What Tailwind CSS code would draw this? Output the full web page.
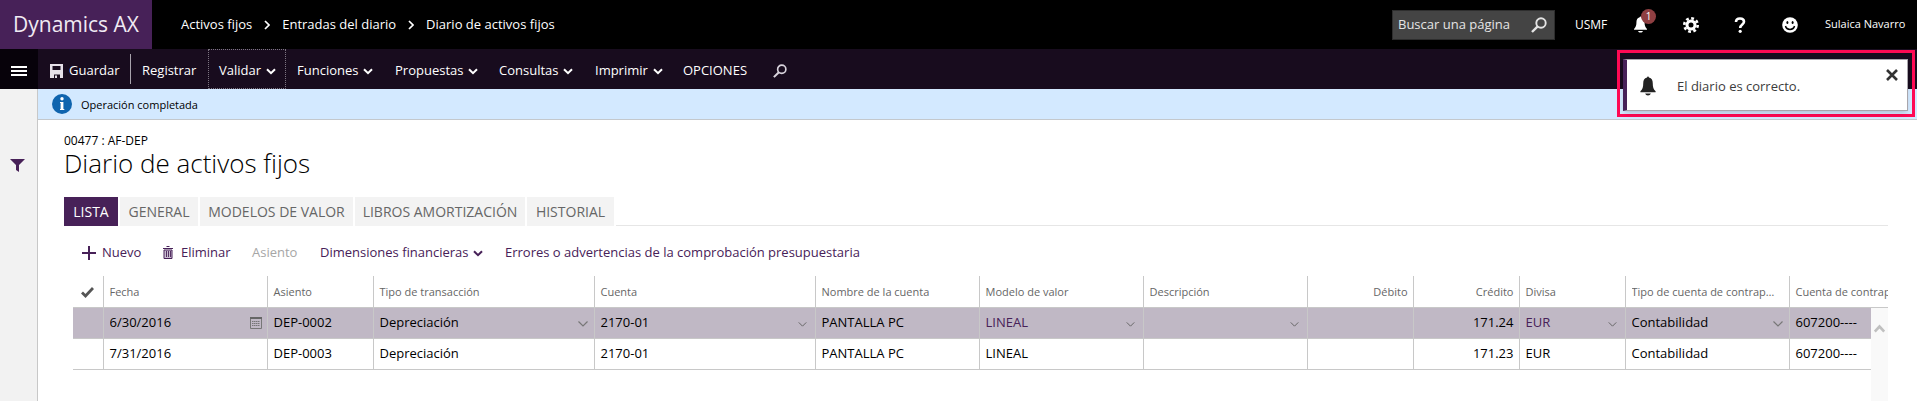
<!DOCTYPE html>
<html lang="es">
<head>
    <meta charset="UTF-8">
    <meta name="viewport" content="width=device-width, initial-scale=1.0">
    <title>Diario de activos fijos - Dynamics AX</title>
    <script src="https://cdn.jsdelivr.net/npm/@tailwindcss/browser@4"></script>
</head>
<body class="flex min-h-screen flex-col overflow-x-hidden bg-white font-['Segoe_UI','Open_Sans',sans-serif] text-[13px] text-black">
    <!-- Shared icons -->
    <svg class="hidden">
        <symbol id="chevron" viewBox="0 0 10 7"><path d="M1 1.2 5 5.2 9 1.2" fill="none" stroke="currentColor" stroke-width="2"/></symbol>
        <symbol id="chevron-thin" viewBox="0 0 10 6"><path d="M.5.5 5 5 9.500.5" fill="none" stroke="currentColor" stroke-width="1.2"/></symbol>
        <symbol id="crumb" viewBox="0 0 6 10"><path d="M1 1 5 5 1 9" fill="none" stroke="currentColor" stroke-width="1.7"/></symbol>
        <symbol id="search" viewBox="0 0 16 16"><circle cx="10" cy="6" r="4.700" fill="none" stroke="currentColor" stroke-width="1.9"/><path d="M6.700 9.300 1 15" stroke="currentColor" stroke-width="2.400"/></symbol>
        <symbol id="bell" viewBox="0 0 16 21"><path d="M7 1.500a1 1 0 0 1 2 0C12 2.300 13 4.500 13 7.500c0 4 .7 6.300 3 8.500v1H0v-1c2.300-2.200 3-4.500 3-8.500 0-3 1-5.200 4-6zM5 18.500h6c-.5 1.300-1.500 2-3 2s-2.500-.7-3-2z" fill="currentColor"/></symbol>
    </svg>

    <!-- Top bar -->
    <header class="flex h-[49px] shrink-0 items-center bg-black text-white">
        <a href="#" class="flex h-full w-[152px] items-center bg-[#472158] pl-[13px] text-[21px] text-[#f0eaf3]">Dynamics AX</a>
        <nav class="flex items-center pl-[29px]" aria-label="Ruta">
            <a href="#">Activos fijos</a>
            <svg class="mx-[12px] h-[10px] w-[6px]"><use href="#crumb"/></svg>
            <a href="#">Entradas del diario</a>
            <svg class="mx-[12px] h-[10px] w-[6px]"><use href="#crumb"/></svg>
            <a href="#">Diario de activos fijos</a>
        </nav>
        <div class="ml-auto flex items-center pr-[9px] text-[12px]">
            <div class="mr-[20px] flex h-[30px] w-[163px] items-center border border-[#2e2e2e] bg-[#444] pr-[7px] pl-[5px]">
                <input type="search" aria-label="Buscar una página" placeholder="Buscar una página" class="min-w-0 flex-1 bg-transparent text-[13px] outline-none placeholder:text-[#e4e4e4]">
                <button aria-label="Buscar"><svg class="h-[16px] w-[16px] text-[#e4e4e4]"><use href="#search"/></svg></button>
            </div>
            <button class="w-[59px] text-left">USMF</button>
            <button class="relative w-[49px]" aria-label="Notificaciones">
                <svg class="h-[17px] w-[13px]"><use href="#bell"/></svg>
                <span class="absolute -top-[7px] left-[7px] h-[15px] w-[15px] rounded-full bg-[#8f3f42] text-[10px] leading-[15px]">1</span>
            </button>
            <button class="w-[51px]" aria-label="Configuración">
                <svg class="h-[16px] w-[16px]" viewBox="0 0 16 16">
                    <circle cx="8" cy="8" r="6.700" fill="none" stroke="currentColor" stroke-width="2.600" stroke-dasharray="2.800 2.460"/>
                    <circle cx="8" cy="8" r="4" fill="none" stroke="currentColor" stroke-width="3"/>
                </svg>
            </button>
            <button class="w-[48px]" aria-label="Ayuda">
                <svg class="h-[16px] w-[12px]" viewBox="0 0 12 16">
                    <path d="M2 5C2 2.800 3.600 1.500 6 1.500s4 1.300 4 3.300C10 7.500 6.200 7.500 6.200 11" fill="none" stroke="currentColor" stroke-width="2.600"/>
                    <circle cx="6.200" cy="14.300" r="1.600" fill="currentColor"/>
                </svg>
            </button>
            <button class="w-[43px]" aria-label="Comentarios">
                <svg class="h-[16px] w-[16px]" viewBox="0 0 16 16">
                    <circle cx="8" cy="8" r="7.800" fill="currentColor"/>
                    <ellipse cx="5.400" cy="5.500" rx="1" ry="1.500"/><ellipse cx="10.600" cy="5.500" rx="1" ry="1.500"/>
                    <path d="M3.500 9c1 4.500 8 4.500 9 0" fill="none" stroke="#000" stroke-width="1.500"/>
                </svg>
            </button>
            <button class="w-[83px] text-left text-[11px]">Sulaica Navarro</button>
        </div>
    </header>

    <!-- Action pane -->
    <div class="relative flex h-[40px] shrink-0 items-stretch bg-[#180c1e] text-white [&>button]:pt-[3px]">
        <button class="flex w-[38px] items-center justify-center bg-[#07020a]" aria-label="Menú">
            <svg class="h-[10px] w-[16px]" viewBox="0 0 16 10"><path d="M0 1h16M0 5h16M0 9h16" stroke="#fff" stroke-width="2"/></svg>
        </button>
        <button class="flex w-[92px] items-center gap-[6px] pl-[12px]">
            <svg class="h-[14px] w-[13px]" viewBox="0 0 13 14" fill="#e6e1e9"><path fill-rule="evenodd" d="M0 0h13v14h-3v-3.500H4V14H0zM2.500 2v4h8V2z"/><path d="M5 11.500h2V14H5z"/></svg>
            Guardar
        </button>
        <div class="my-[5px] w-[1px] bg-[#a8a3ac]"></div>
        <button class="w-[77px] pl-[11px] text-left">Registrar</button>
        <button class="flex w-[78px] items-center gap-[5px] border border-dotted border-[#7c7581] pl-[10px]">Validar <svg class="mt-[2px] h-[7px] w-[10px]"><use href="#chevron"/></svg></button>
        <button class="flex w-[98px] items-center gap-[5px] pl-[11px]">Funciones <svg class="mt-[2px] h-[7px] w-[10px]"><use href="#chevron"/></svg></button>
        <button class="flex w-[104px] items-center gap-[5px] pl-[11px]">Propuestas <svg class="mt-[2px] h-[7px] w-[10px]"><use href="#chevron"/></svg></button>
        <button class="flex w-[96px] items-center gap-[5px] pl-[11px]">Consultas <svg class="mt-[2px] h-[7px] w-[10px]"><use href="#chevron"/></svg></button>
        <button class="flex w-[88px] items-center gap-[5px] pl-[11px]">Imprimir <svg class="mt-[2px] h-[7px] w-[10px]"><use href="#chevron"/></svg></button>
        <button class="w-[90px] pl-[11px] text-left">OPCIONES</button>
        <button class="pl-[11px]" aria-label="Buscar acción"><svg class="h-[14px] w-[14px] text-[#d8d3dc]"><use href="#search"/></svg></button>

        <!-- Notification toast -->
        <div class="absolute top-[1px] right-[2px] z-10 border-[3px] border-[#ff0a54] pt-[6px] pr-[4px] pb-[3px] pl-[3px]">
            <div class="flex h-[52px] w-[285px] border border-l-4 border-[#a9a6ac] border-l-[#472158] bg-white pl-[13px] text-[#3c3c3c] shadow-md" role="status">
                <svg class="mt-[16px] h-[20px] w-[16px] text-[#222]"><use href="#bell"/></svg>
                <p class="flex-1 self-center pt-[3px] pl-[21px]">El diario es correcto.</p>
                <button class="mt-[9px] mr-[9px] self-start" aria-label="Cerrar"><svg class="h-[12px] w-[12px]" viewBox="0 0 12 12"><path d="m1 1 10 10M11 1 1 11" stroke="#333" stroke-width="2.600"/></svg></button>
            </div>
        </div>
    </div>

    <div class="flex flex-1">
        <aside class="w-[38px] shrink-0 border-r border-[#c8c8c8] bg-[#f2f2f2] pt-[70px] pl-[10px]">
            <button class="block" aria-label="Filtro"><svg class="h-[13px] w-[15px]" viewBox="0 0 15 13"><path d="M0 0h15L9 6v7L6 11V6z" fill="#472158"/></svg></button>
        </aside>

        <main class="flex min-w-0 flex-1 flex-col">
            <div class="flex h-[31px] shrink-0 items-center border-b border-[#c4c8cc] bg-[#d3e9ff] pl-[14px] text-[11px]">
                <svg class="h-[20px] w-[20px]" viewBox="0 0 20 20"><circle cx="10" cy="10" r="10" fill="#0f64ae"/><circle cx="10" cy="4.800" r="1.700" fill="#fff"/><path d="M8 8h3.400v7.500h-2.800V9H8z" fill="#fff"/><path d="M8 15h4.300v1H8z" fill="#fff"/></svg>
                <span class="pt-[2px] pl-[9px]">Operación completada</span>
            </div>

            <div class="flex flex-1 flex-col pt-[13px] pr-[29px] pl-[26px]">
                <p class="text-[12px] leading-[16px]">00477 : AF-DEP</p>
                <h1 class="text-[26px] leading-[28px] font-light">Diario de activos fijos</h1>

                <div class="mt-[20px] flex h-[29px] gap-[2px] text-[14px] text-[#666]" role="tablist">
                    <button class="w-[54px] bg-[#472158] text-white" role="tab" aria-selected="true">LISTA</button>
                    <button class="w-[78px] bg-[#f3f3f3]" role="tab">GENERAL</button>
                    <button class="w-[153px] bg-[#f3f3f3]" role="tab">MODELOS DE VALOR</button>
                    <button class="w-[170px] bg-[#f3f3f3]" role="tab">LIBROS AMORTIZACIÓN</button>
                    <button class="w-[87px] bg-[#f3f3f3]" role="tab">HISTORIAL</button>
                    <div class="flex-1 border-b border-[#e6e6e6]"></div>
                </div>

                <div class="flex h-[50px] items-center pt-[3px] pl-[18px] text-[#472158]">
                    <button class="flex w-[81px] items-center gap-[6px]">
                        <svg class="h-[14px] w-[14px]" viewBox="0 0 14 14"><path d="M7 0v14M0 7h14" stroke="currentColor" stroke-width="2"/></svg>
                        Nuevo
                    </button>
                    <button class="flex w-[89px] items-center gap-[8px]">
                        <svg class="h-[13px] w-[10px]" viewBox="0 0 10 13"><path d="M3.500.5h3M0 2.500h10" stroke="currentColor"/><path d="M1 4h8v8.500H1z" fill="#c9bdd0" stroke="currentColor"/><path d="M3.500 5v6M5.500 5v6M7.500 5v6" stroke="currentColor" stroke-width=".9"/></svg>
                        Eliminar
                    </button>
                    <button class="w-[68px] text-left text-[#a6a6a6]" disabled>Asiento</button>
                    <button class="flex w-[185px] items-center gap-[4px]">Dimensiones financieras <svg class="mt-[2px] h-[7px] w-[10px]"><use href="#chevron"/></svg></button>
                    <button>Errores o advertencias de la comprobación presupuestaria</button>
                </div>

                <div class="relative ml-[9px] flex-1 overflow-hidden">
                    <table class="w-full table-fixed border-collapse text-left whitespace-nowrap [&_td]:h-[31px] [&_td]:border-b [&_td]:border-[#c8c8c8] [&_td]:pr-[5px] [&_td]:pl-[6px] [&_td+td]:border-l [&_th]:h-[31px] [&_th]:overflow-hidden [&_th]:border-b [&_th]:border-[#c8c8c8] [&_th]:pt-[2px] [&_th]:pr-[5px] [&_th]:pl-[6px] [&_th]:text-[11px] [&_th]:font-normal [&_th+th]:border-l">
                        <colgroup>
                            <col class="w-[30px]"><col class="w-[164px]"><col class="w-[106px]"><col class="w-[221px]"><col class="w-[221px]"><col class="w-[164px]"><col class="w-[164px]"><col class="w-[164px]"><col class="w-[106px]"><col class="w-[106px]"><col class="w-[106px]"><col class="w-[164px]"><col>
                        </colgroup>
                        <thead class="text-[#666]">
                            <tr>
                                <th aria-label="Seleccionar"><svg class="ml-[2px] h-[11px] w-[13px]" viewBox="0 0 13 11"><path d="M1 5.500 4.500 9 12 1" fill="none" stroke="#555" stroke-width="2.800"/></svg></th>
                                <th>Fecha</th>
                                <th>Asiento</th>
                                <th>Tipo de transacción</th>
                                <th>Cuenta</th>
                                <th>Nombre de la cuenta</th>
                                <th>Modelo de valor</th>
                                <th>Descripción</th>
                                <th class="text-right">Débito</th>
                                <th class="text-right">Crédito</th>
                                <th>Divisa</th>
                                <th><div class="mr-[8px] truncate">Tipo de cuenta de contrapartida</div></th>
                                <th>Cuenta de contrapartida</th>
                            </tr>
                        </thead>
                        <tbody>
                            <tr class="bg-[#c0b8c5]">
                                <td></td>
                                <td><div class="flex items-center">
                                    <input type="text" aria-label="Fecha" value="6/30/2016" class="min-w-0 flex-1 bg-transparent outline-none">
                                    <button aria-label="Abrir calendario"><svg class="h-[12px] w-[12px]" viewBox="0 0 12 12"><path d="M.5.5h11v11H.5z" fill="none" stroke="#777"/><path d="M0 1h12" stroke="#666" stroke-width="2"/><path d="M2 4.500h8M2 6.500h8M2 8.500h8" stroke="#777" stroke-dasharray="1.500 .5"/></svg></button>
                                </div></td>
                                <td>DEP-0002</td>
                                <td><div class="relative flex items-center">
                                    <select aria-label="Tipo de transacción" class="w-full appearance-none bg-transparent outline-none"><option>Depreciación</option></select>
                                    <svg class="pointer-events-none absolute right-[1px] mt-[2px] h-[6px] w-[10px] text-[#777]"><use href="#chevron-thin"/></svg>
                                </div></td>
                                <td><div class="relative flex items-center">
                                    <select aria-label="Cuenta" class="w-full appearance-none bg-transparent outline-none"><option>2170-01</option></select>
                                    <svg class="pointer-events-none absolute right-[3px] mt-[4px] h-[5px] w-[9px] text-[#666]"><use href="#chevron-thin"/></svg>
                                </div></td>
                                <td>PANTALLA PC</td>
                                <td><div class="relative flex items-center">
                                    <select aria-label="Modelo de valor" class="w-full appearance-none bg-transparent text-[#472158] outline-none"><option>LINEAL</option></select>
                                    <svg class="pointer-events-none absolute right-[3px] mt-[4px] h-[5px] w-[9px] text-[#666]"><use href="#chevron-thin"/></svg>
                                </div></td>
                                <td><div class="relative flex items-center">
                                    <select aria-label="Descripción" class="w-full appearance-none bg-transparent outline-none"><option></option></select>
                                    <svg class="pointer-events-none absolute right-[3px] mt-[4px] h-[5px] w-[9px] text-[#666]"><use href="#chevron-thin"/></svg>
                                </div></td>
                                <td></td>
                                <td class="text-right">171.24</td>
                                <td><div class="relative flex items-center">
                                    <select aria-label="Divisa" class="w-full appearance-none bg-transparent text-[#472158] outline-none"><option>EUR</option></select>
                                    <svg class="pointer-events-none absolute right-[3px] mt-[4px] h-[5px] w-[9px] text-[#666]"><use href="#chevron-thin"/></svg>
                                </div></td>
                                <td><div class="relative flex items-center">
                                    <select aria-label="Tipo de cuenta de contrapartida" class="w-full appearance-none bg-transparent outline-none"><option>Contabilidad</option></select>
                                    <svg class="pointer-events-none absolute right-[1px] mt-[2px] h-[6px] w-[10px] text-[#777]"><use href="#chevron-thin"/></svg>
                                </div></td>
                                <td>607200----</td>
                            </tr>
                            <tr>
                                <td></td>
                                <td>7/31/2016</td>
                                <td>DEP-0003</td>
                                <td>Depreciación</td>
                                <td>2170-01</td>
                                <td>PANTALLA PC</td>
                                <td>LINEAL</td>
                                <td></td>
                                <td></td>
                                <td class="text-right">171.23</td>
                                <td>EUR</td>
                                <td>Contabilidad</td>
                                <td>607200----</td>
                            </tr>
                        </tbody>
                    </table>
                    <!-- Grid scrollbar -->
                    <div class="absolute top-[32px] right-0 bottom-0 w-[17px] bg-[#f9f9f9] pt-[16px]">
                        <button class="mx-auto block" aria-label="Desplazar hacia arriba"><svg class="h-[9px] w-[11px]" viewBox="0 0 11 9"><path d="M.8 7.500 5.500 2.500l4.700 5" fill="none" stroke="#c0c0c0" stroke-width="2.600"/></svg></button>
                    </div>
                </div>
            </div>
        </main>
    </div>
</body>
</html>
